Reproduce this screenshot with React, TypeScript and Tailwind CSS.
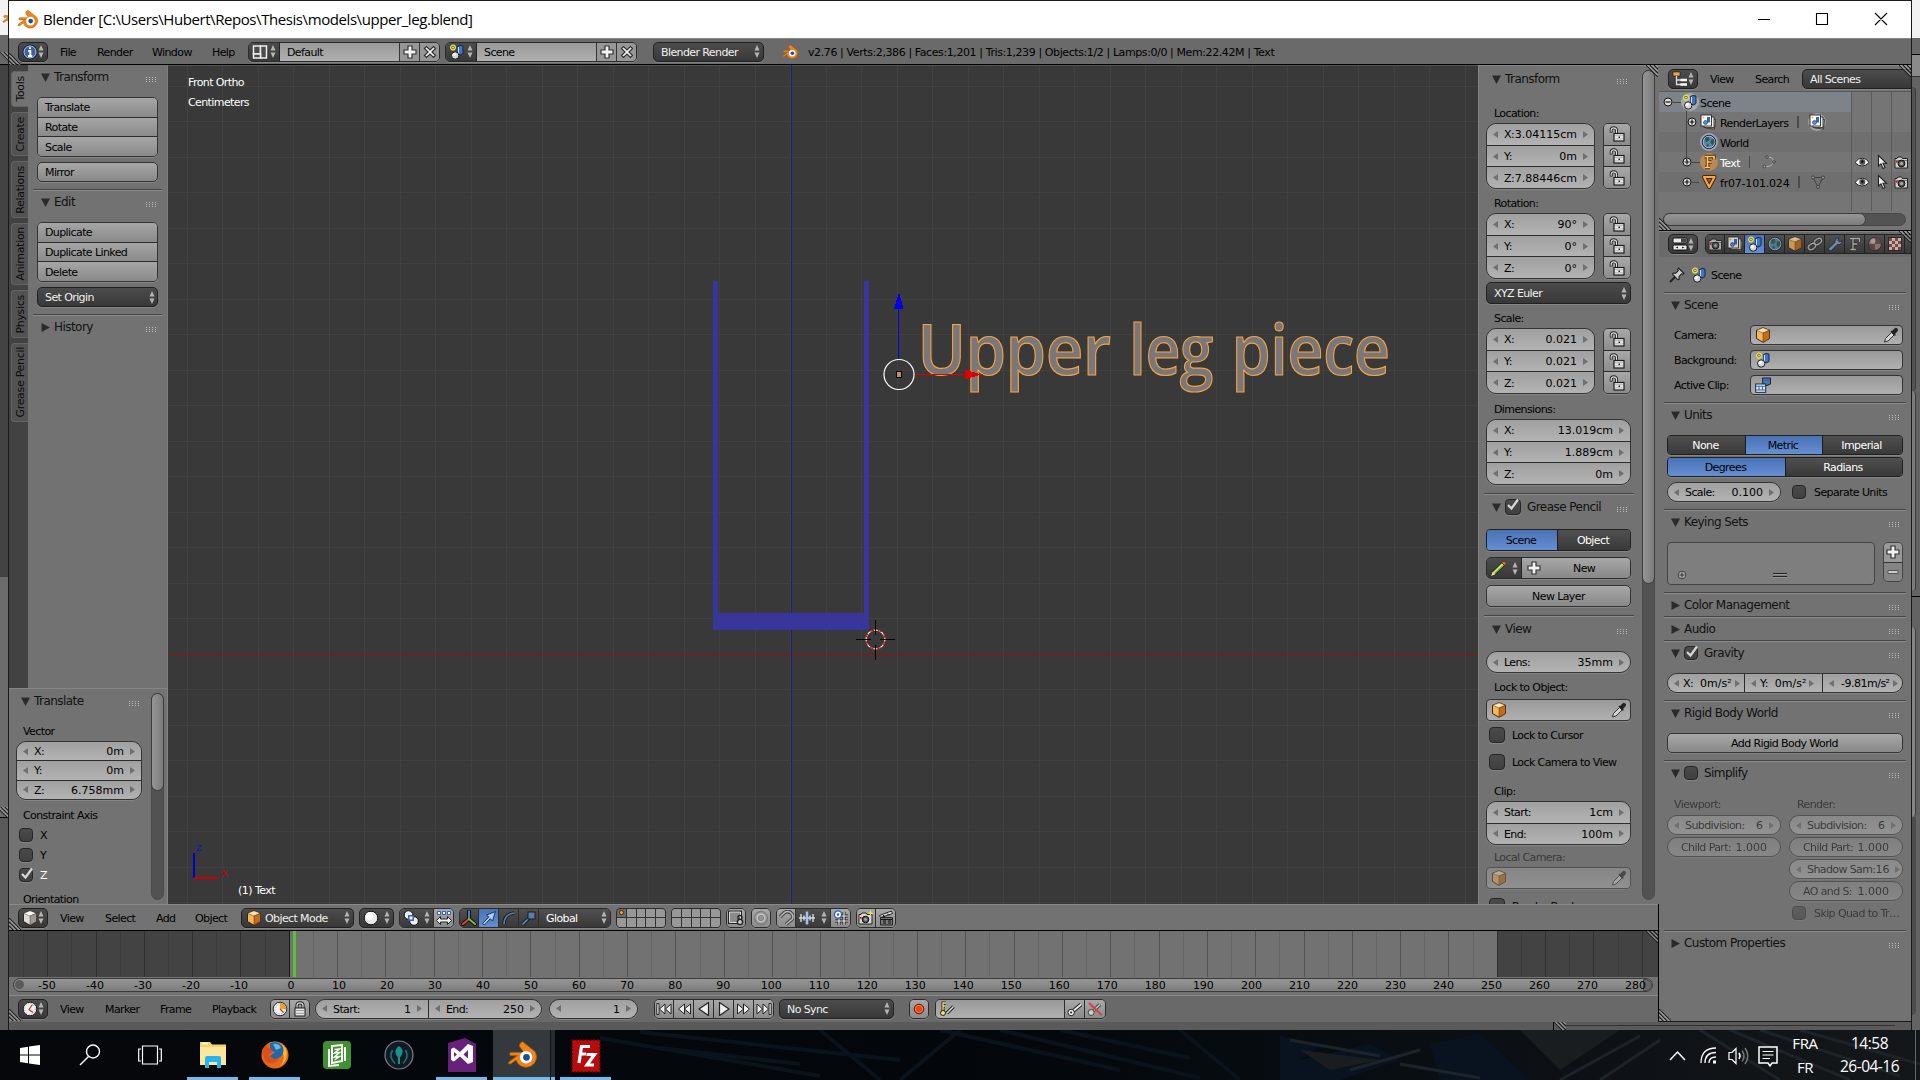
import React from "react";

type Kids = { children?: React.ReactNode };

/* ---------- icons (16x16 grid) ---------- */

const SceneShape = () => (
  <g>
    <circle cx="4" cy="3.6" r="2.4" fill="#6b6a35" stroke="#e3df4e" strokeWidth="1.3" />
    <circle cx="4" cy="3.6" r=".8" fill="#fffde0" />
    <path d="M8.5 2.5Q11 .6 14 2V9.500Q11.500 12 8.500 10Z" fill="#3f73c4" stroke="#16284a" />
    <path d="M10 3V10Q8.800 10 8.800 9.500V3Z" fill="#cfe2ff" />
    <circle cx="6.200" cy="11.500" r="3.700" fill="#d8d8d8" stroke="#1c1c1c" />
    <circle cx="5.200" cy="10.300" r="1.500" fill="#fff" />
  </g>
);

const CubeShape = ({ a, b, c }: { a: string; b: string; c: string }) => (
  <g stroke="#2a1a08" strokeWidth=".9" strokeLinejoin="round">
    <path d="M8 .8 14.500 3.300V11.500L8 15.300 1.500 11.500V3.300Z" fill={b} />
    <path d="M8 .8 14.500 3.300 8 6 1.500 3.300Z" fill={a} strokeWidth=".4" />
    <path d="M8 6 14.500 3.300V11.500L8 15.300Z" fill={c} strokeWidth=".4" />
  </g>
);

const ICONS: Record<string, React.ReactNode> = {
  info: (
    <g>
      <circle cx="8" cy="8" r="7" fill="#3c5f9e" stroke="#0f1a30" />
      <circle cx="8" cy="8" r="6" fill="none" stroke="#b9cbe8" strokeWidth=".9" />
      <path d="M8 3.200V5M6.200 7H8.300V11.500M6 12H10.300" stroke="#fff" strokeWidth="1.900" fill="none" />
    </g>
  ),
  layout: (
    <g fill="#4c4c4c" stroke="#eee" strokeWidth="1.500">
      <rect x="1.500" y="2" width="7" height="8" />
      <rect x="8.500" y="2" width="6" height="12" />
      <rect x="1.500" y="10" width="7" height="4" />
    </g>
  ),
  scene: <SceneShape />,
  plus: <path d="M6 2H10V6H14V10H10V14H6V10H2V6H6Z" fill="#f2f2f2" stroke="#333" strokeWidth="1.200" />,
  minus: <path d="M3 6.500H13V9.500H3Z" fill="#ccc" stroke="#555" />,
  x: <path d="M2.500 4.500 4.500 2.500 8 6 11.500 2.500 13.500 4.500 10 8 13.500 11.500 11.500 13.500 8 10 4.500 13.500 2.500 11.500 6 8Z" fill="#f2f2f2" stroke="#333" strokeWidth="1.200" />,
  blender: (
    <g>
      <path d="M8.300.9 15 6.200A5.600 5.600 0 1 1 4.800 10.700L2 12.700Q.4 13 1 11.700L5.600 8.300H1.800Q1 7.200 2 6.600H9L6.600 3.200Q6.600 1.500 8.300.9Z" fill="#f08418" stroke="#b35c08" strokeWidth=".4" />
      <circle cx="10.200" cy="9.200" r="3.300" fill="#fff" />
      <circle cx="10.400" cy="9.200" r="1.800" fill="#1d4f91" />
    </g>
  ),
  lockopen: (
    <g>
      <path d="M2.200 6.500V4Q2.200 1.800 4.700 1.800T7.500 4V8" fill="none" stroke="#222" strokeWidth="3" />
      <path d="M2.200 5.800V4Q2.200 1.800 4.700 1.800T7.500 4V8" fill="none" stroke="#ddd" strokeWidth="1.200" />
      <rect x="5" y="7.500" width="10" height="7.500" fill="#e6e6e6" stroke="#1d1d1d" strokeWidth="1.200" />
      <path d="M6 9.700H14M6 12.800H14" stroke="#b5b5b5" />
      <rect x="9.500" y="10.500" width="1.500" height="1.500" fill="#222" />
    </g>
  ),
  lock: (
    <g>
      <path d="M5 8V4.500Q5 1.800 8 1.800T11 4.500V8" fill="none" stroke="#222" strokeWidth="3.200" />
      <path d="M5 8V4.500Q5 1.800 8 1.800T11 4.500V8" fill="none" stroke="#ddd" strokeWidth="1.200" />
      <rect x="3" y="7" width="10" height="8" fill="#e6e6e6" stroke="#1d1d1d" />
      <path d="M4 9.500H12M4 12.300H12" stroke="#999" />
    </g>
  ),
  cube: <CubeShape a="#ffe2b0" b="#f6b45e" c="#c26d18" />,
  cubegray: <CubeShape a="#fff" b="#dcdcdc" c="#9a9a9a" />,
  eyedrop: (
    <g>
      <path d="M1.500 15 2.500 11.500 8.500 5.500 11 8 5 14Z" fill="#d5d5d5" stroke="#222" strokeWidth=".9" />
      <path d="M7.500 4.500 12 9 12.800 7.800 12 7 14.800 4Q15.500 2 14 1.200T11.500 1.500L9 4 8.300 3.500Z" fill="#222" />
    </g>
  ),
  clip: (
    <g stroke="#15233c" fill="#e5eefc">
      <path d="M7.500 1H15.500V7L12 8.500H8Z" fill="#4c77ad" />
      <rect x=".7" y="7" width="10" height="8.300" />
      <path d="M1 9.300H10.500M1 13H10.500M4 9V13M7.500 9V13M10 3.300H15" stroke="#3366a8" strokeWidth="1.100" />
    </g>
  ),
  outliner: (
    <g>
      <rect x="1" y="1" width="7" height="4" fill="#f2a24c" stroke="#111" strokeWidth=".6" />
      <path d="M4.500 5V13.500H9M4.500 9H9" stroke="#ddd" strokeWidth="1.300" fill="none" />
      <path d="M8.500 9H15M8.500 13.500H15" stroke="#fff" strokeWidth="2.600" />
    </g>
  ),
  props: (
    <g>
      <rect x="1" y="2" width="14" height="5" rx="1.500" fill="#eee" stroke="#111" />
      <path d="M9 2.500H14.500V6.500H9Z" fill="#444" />
      <rect x="1" y="9" width="14" height="5" rx="1.500" fill="#eee" stroke="#111" />
      <path d="M6 10.500 3.500 11.500 6 12.500ZM10 10.500 12.500 11.500 10 12.500Z" fill="#222" />
    </g>
  ),
  camera: (
    <g>
      <path d="M2 4.500H4L5 3H8.500L9.500 4.500H14.500V14H2Z" fill="#cfcfcf" stroke="#222" />
      <path d="M2.500 6.500H14" stroke="#777" />
      <circle cx="8.500" cy="9.500" r="3.400" fill="#555" stroke="#111" />
      <circle cx="8.500" cy="9.500" r="1.600" fill="#aaa" />
      <rect x="3" y="7" width="1.800" height="1.800" fill="#d22" />
    </g>
  ),
  layersimg: (
    <g>
      <path d="M6 4.500 15.500 5.500 14.500 15 5.500 14Z" fill="#cfc8a8" stroke="#222" strokeWidth=".8" />
      <path d="M4 3H14V13.500H4Z" fill="#eee" stroke="#222" strokeWidth=".8" />
      <rect x="1" y="1" width="10.500" height="11" fill="#fff" stroke="#222" strokeWidth=".9" />
      <path d="M7 3H10V8.500H7Z" fill="#2f67c0" />
      <circle cx="5.500" cy="8.500" r="2" fill="#5d8fdd" stroke="#143060" strokeWidth=".6" />
      <circle cx="3.400" cy="3.400" r="1" fill="#e3c02d" />
    </g>
  ),
  world: (
    <g>
      <circle cx="8" cy="8" r="6.700" fill="#5487b4" stroke="#16202c" />
      <circle cx="8" cy="8" r="5.800" fill="none" stroke="#b9d0e2" strokeWidth=".9" opacity=".8" />
      <path d="M4 4Q6 2.500 8 3L8.500 6 6 8 4.500 7.500ZM10 5.500 13 5 13.500 8.500 11.500 11.500 9.500 9ZM6 9.500 8 11 7 13 5.500 12Z" fill="#2d5b3a" />
    </g>
  ),
  link: (
    <g fill="none">
      <ellipse cx="5" cy="10.500" rx="4" ry="2.600" transform="rotate(-35 5 10.500)" stroke="#222" strokeWidth="3" />
      <ellipse cx="11" cy="5.500" rx="4" ry="2.600" transform="rotate(-35 11 5.500)" stroke="#222" strokeWidth="3" />
      <ellipse cx="5" cy="10.500" rx="4" ry="2.600" transform="rotate(-35 5 10.500)" stroke="#bbb" strokeWidth="1.500" />
      <ellipse cx="11" cy="5.500" rx="4" ry="2.600" transform="rotate(-35 11 5.500)" stroke="#bbb" strokeWidth="1.500" />
    </g>
  ),
  wrench: <path d="M1.500 12.500 8 6.500Q7.500 2.500 12 1.500L11 4.500 12.500 6 15 4.500Q15 9 10 8.700L4 15Q2 15.500 1.500 12.500Z" fill="#7ea3cf" stroke="#1d2b3d" />,
  wave: (
    <g fill="none">
      <path d="M3 2.500H12.500V6M6 2.500V13.500M3.500 13.500H9M6 8H10" stroke="#222" strokeWidth="3" />
      <path d="M3 2.500H12.500V6M6 2.500V13.500M3.500 13.500H9M6 8H10" stroke="#c9c9c9" strokeWidth="1.300" />
    </g>
  ),
  fontobj: (
    <g fill="none">
      <path d="M3.500 2.500H13V5.500M6.500 2.500V13.500M4 13.500H9M6.500 8H10.500" stroke="#4b2504" strokeWidth="3.400" />
      <path d="M3.500 2.500H13V5.500M6.500 2.500V13.500M4 13.500H9M6.500 8H10.500" stroke="#ffc27a" strokeWidth="1.700" />
    </g>
  ),
  material: (
    <g>
      <circle cx="8" cy="8" r="6.500" fill="#a98080" stroke="#222" />
      <path d="M8 8V1.500A6.500 6.500 0 0 1 14.500 8ZM8 8V14.500A6.500 6.500 0 0 1 1.500 8Z" fill="#5e4a4a" />
      <circle cx="6" cy="5" r="2.500" fill="#e0c8c8" opacity=".7" />
    </g>
  ),
  texture: (
    <g>
      <rect x="1.500" y="1.500" width="13" height="13" fill="#ddd" stroke="#222" />
      <path d="M2 2H5V5H2ZM8 2H11V5H8ZM5 5H8V8H5ZM11 5H14V8H11ZM2 8H5V11H2ZM8 8H11V11H8ZM5 11H8V14H5ZM11 11H14V14H11Z" fill="#a33e3e" />
    </g>
  ),
  pin: (
    <g strokeLinejoin="round">
      <path d="M1 15 6.500 9.500" stroke="#222" strokeWidth="2" />
      <path d="M9.500 1 15 6.500 13.500 7.200 12.500 6.800 10 9.500 10.200 12 9 12.800 3.500 7.200 4.200 6 6.800 6.200 9.300 3.600 8.800 2.300Z" fill="#cfcfcf" stroke="#1d1d1d" strokeWidth="1.100" />
    </g>
  ),
  pencil: (
    <g>
      <path d="M1 15 2.500 11 11 2.500 13.800 5.200 5 13.500Z" fill="#7aa52e" stroke="#1f2b06" strokeWidth=".8" />
      <path d="M3.500 12 12 3.700" stroke="#d9ee8c" strokeWidth="1.200" />
      <path d="M11 2.500 12.500 1.200Q15.800 1.500 15 4L13.800 5.200Z" fill="#e2604a" stroke="#4d120a" strokeWidth=".5" />
      <path d="M1 15 2.500 11 5 13.500Z" fill="#f1dcae" />
    </g>
  ),
  sphere: (
    <g>
      <circle cx="8" cy="8" r="6.800" fill="#e8e8e8" stroke="#111" />
      <circle cx="6.500" cy="6" r="3.800" fill="#fff" />
    </g>
  ),
  pivot: (
    <g>
      <circle cx="5.500" cy="5" r="4.300" fill="#eee" stroke="#111" />
      <circle cx="11" cy="11" r="4.300" fill="#eee" stroke="#111" />
      <rect x="5.800" y="5.800" width="4.400" height="4.400" fill="#fff" stroke="#2a62c4" strokeWidth="1.500" />
    </g>
  ),
  centers: (
    <g>
      <path d="M1.500 1.500H4.500V4.500H1.500ZM6.500 1.500H9.500V4.500H6.500ZM11.500 1.500H14.500V4.500H11.500Z" fill="#fff" stroke="#2a62c4" />
      <path d="M.5 10.500 4.500 6.500V9H11.500V6.500L15.500 10.500 11.500 14.500V12H4.500V14.500Z" fill="#f0f0f0" stroke="#222" />
    </g>
  ),
  axes: (
    <g fill="none" strokeLinecap="round">
      <path d="M8 1.500V9M8 9 2 14M8 9 14 14" stroke="#111" strokeWidth="4" />
      <path d="M8 1.500V9" stroke="#5b8be0" strokeWidth="1.800" />
      <path d="M8 9 2 14" stroke="#e2462e" strokeWidth="2" />
      <path d="M8 9 14 14" stroke="#70c23c" strokeWidth="2" />
    </g>
  ),
  arrow: <path d="M1.500 13.500 7.800 7 5.500 5 14.500 1.500 11.500 11 9.300 8.700 3.500 15Z" fill="#a9cdf5" stroke="#15305c" />,
  arc: (
    <g fill="none">
      <path d="M3 14Q3 4.500 13 3" stroke="#151d2a" strokeWidth="3.600" />
      <path d="M3 14Q3 4.500 13 3" stroke="#5b7fa8" strokeWidth="1.700" />
    </g>
  ),
  scaleman: (
    <g>
      <path d="M1.500 14.500 9 7" stroke="#151d2a" strokeWidth="3.500" />
      <path d="M1.500 14.500 9 7" stroke="#7090b5" strokeWidth="1.600" />
      <rect x="7" y="2" width="7" height="7" fill="#5b7fa8" stroke="#151d2a" />
    </g>
  ),
  lockcam: (
    <g>
      <path d="M1.500 2H12.500V12.500H1.500Z" fill="none" stroke="#222" strokeWidth="3" />
      <path d="M1.500 2H12.500V12.500H1.500Z" fill="#8b8b8b" stroke="#ddd" />
      <circle cx="12" cy="7.500" r="2" fill="none" stroke="#222" strokeWidth="1.400" />
      <circle cx="12" cy="12" r="2.600" fill="#ccc" stroke="#222" strokeWidth="1.400" />
    </g>
  ),
  prop: (
    <g fill="none" stroke="#7b7b7b">
      <circle cx="8" cy="8" r="6.500" strokeWidth="1.300" />
      <circle cx="8" cy="8" r="3.700" stroke="#c4c4c4" strokeWidth="1.600" />
      <circle cx="8" cy="8" r="2.500" />
    </g>
  ),
  magnet: (
    <g fill="none">
      <path d="M2 7 6.500 2.500Q11 0 14 4T12 11L8 14.500" stroke="#444" strokeWidth="3.600" />
      <path d="M2 7 6.500 2.500Q11 0 14 4T12 11L8 14.500" stroke="#bbb" strokeWidth="1.500" />
    </g>
  ),
  increment: (
    <g>
      <path d="M0 8H16M2 4V12M5 5.500V10.500M11 5.500V10.500M14 4V12" stroke="#d8d8d8" strokeWidth="1.400" />
      <path d="M8 1.500V14.500" stroke="#9cc4ff" strokeWidth="2.600" />
    </g>
  ),
  snapgrid: (
    <g>
      <path d="M6 2V15M11 2V15M2 6H15M2 11H15" stroke="#222" strokeWidth="3" />
      <path d="M6 2V15M11 2V15M2 6H15M2 11H15" stroke="#eee" strokeWidth="1.200" />
      <circle cx="5" cy="4.500" r="3.600" fill="#fff" stroke="#2a62c4" strokeWidth="1.300" />
      <circle cx="5" cy="4.500" r="1.200" fill="#2a62c4" />
    </g>
  ),
  camplus: (
    <g>
      <path d="M1 4.500H3L4 3H8L9 4.500H14V14H1Z" fill="#d8d8d8" stroke="#222" />
      <circle cx="7.500" cy="9.500" r="3.300" fill="#555" stroke="#111" />
      <circle cx="7.500" cy="9.500" r="1.400" fill="#aaa" />
      <rect x="2" y="7" width="1.800" height="1.800" fill="#d22" />
      <path d="M12.500 0 13.300 2.500 16 3.200 13.300 4 12.500 6.500 11.700 4 9.500 3.200 11.700 2.500Z" fill="#ffe04a" />
    </g>
  ),
  clapper: (
    <g stroke="#222">
      <path d="M1.500 5.500 13.500 1 14.500 3.500 2.500 7.500Z" fill="#e5e5e5" />
      <path d="M2.500 7.500H14.500V15H2.500Z" fill="#777" />
      <path d="M3 9.500H14M5 5 7 7M9 3.500 11 5.500M5 11H8M10 11H13M5 13H8M10 13H13" stroke="#111" />
    </g>
  ),
  clock: (
    <g>
      <circle cx="8" cy="8" r="6.800" fill="#f3f3f3" stroke="#222" />
      <circle cx="8" cy="8" r="5.300" fill="none" stroke="#999" strokeDasharray="1 1.800" />
      <path d="M10.500 3.500 7 8.500 11 11.500" fill="none" stroke="#c33" strokeWidth="1.200" />
    </g>
  ),
  clockrange: (
    <g>
      <circle cx="8" cy="8" r="6.800" fill="#f3f3f3" stroke="#222" />
      <path d="M8 8V1.700A6.300 6.300 0 0 1 14.300 8Z" fill="#ff9e1b" />
      <circle cx="8" cy="8" r="5" fill="none" stroke="#999" strokeDasharray="1 1.700" />
      <path d="M8 8 11.500 11.500" stroke="#c33" strokeWidth="1.200" />
    </g>
  ),
  first: (
    <g fill="#eee" stroke="#222" strokeLinejoin="round">
      <path d="M.8 2.500H3V13.500H.8Z" />
      <path d="M9 3V13L3.500 8ZM15 3V13L9.500 8Z" />
    </g>
  ),
  prev: <path d="M8.500 3V13L2.500 8ZM14.500 3V13L8.500 8Z" fill="#eee" stroke="#222" strokeLinejoin="round" />,
  back: <path d="M12.500 1.500V14.500L3 8Z" fill="#eee" stroke="#222" strokeWidth="1.200" strokeLinejoin="round" />,
  record: (
    <g>
      <circle cx="8" cy="8" r="4.800" fill="#e8420e" stroke="#5a1803" />
      <circle cx="8" cy="8" r="3.600" fill="none" stroke="#ff9a70" strokeWidth=".7" />
    </g>
  ),
  keyset: (
    <g fill="none">
      <path d="M4 11V2H7M4 5H6" stroke="#222" strokeWidth="3" />
      <path d="M4 11V2H7M4 5H6" stroke="#f3df7a" strokeWidth="1.300" />
      <path d="M8 12 14.500 5.500" stroke="#222" strokeWidth="3.400" />
      <path d="M8 12 14.500 5.500" stroke="#ddd" strokeWidth="1.500" />
      <circle cx="4" cy="12" r="2.500" fill="#f3df7a" stroke="#222" />
    </g>
  ),
  key: (
    <g>
      <path d="M5 11 14 3.500" stroke="#222" strokeWidth="3.800" />
      <path d="M5 11 14 3.500" stroke="#eee" strokeWidth="1.700" />
      <circle cx="4.200" cy="11.500" r="3.200" fill="#eee" stroke="#222" />
      <circle cx="4.200" cy="11.500" r="1.100" fill="#222" />
    </g>
  ),
  keydel: (
    <g>
      <path d="M5 11 13 3.500" stroke="#444" strokeWidth="3.600" />
      <path d="M5 11 13 3.500" stroke="#ccc" strokeWidth="1.500" />
      <circle cx="4.200" cy="11.500" r="3" fill="#ccc" stroke="#444" />
      <path d="M2 2 14.500 14" stroke="#d64040" strokeWidth="2" />
    </g>
  ),
  eye: (
    <g>
      <path d="M1 8.500Q4 4 8.500 4.200 12.500 4.200 15 8.500 12 12 8 12 4 12 1 8.500Z" fill="#f4f4f4" stroke="#222" />
      <circle cx="8.300" cy="8" r="3" fill="#555" />
      <circle cx="8.300" cy="7.600" r="1.300" fill="#111" />
    </g>
  ),
  cursor: <path d="M4.500 1.500V12L7 9.800 9 14.500 11 13.500 9 9.300H12.500Z" fill="#eee" stroke="#222" strokeWidth="1.100" />,
  mesh: (
    <g>
      <path d="M3 3H13.500L8.200 13Z" fill="none" stroke="#4b2504" strokeWidth="4" strokeLinejoin="round" />
      <path d="M3 3H13.500L8.200 13Z" fill="none" stroke="#ffa849" strokeWidth="2" strokeLinejoin="round" />
    </g>
  ),
  meshdata: (
    <g stroke="#404040" fill="#999">
      <path d="M3 3.500H13L8 13Z" fill="none" />
      <circle cx="3" cy="3.500" r="1.500" />
      <circle cx="13" cy="3.500" r="1.500" />
      <circle cx="8" cy="13" r="1.500" />
    </g>
  ),
  curvedata: (
    <g stroke="#444" fill="#aaa">
      <path d="M6 3Q13 3 12.500 8 11 13 4.500 12.500" fill="none" stroke="#b5b5b5" />
      <circle cx="6" cy="3" r="1.300" />
      <circle cx="13" cy="8" r="1.300" />
      <circle cx="3.500" cy="12.500" r="1.300" />
    </g>
  ),
};

const Icon = ({ n, s = 16, className = "" }: { n: string; s?: number; className?: string }) => (
  <svg width={s} height={s} viewBox="0 0 16 16" className={"shrink-0 " + className}>
    {ICONS[n]}
  </svg>
);

const Flip = ({ n }: { n: string }) => <Icon n={n} className="-scale-x-100" />;

const UpDown = ({ className = "" }: { className?: string }) => (
  <svg width="6" height="13" viewBox="0 0 6 13" className={"shrink-0 " + className}>
    <path d="M3 0 5.500 5.500H.5ZM3 13 .5 7.500H5.500Z" fill="#b5b5b5" />
  </svg>
);

const Corner = ({ className = "" }: { className?: string }) => (
  <svg width="12" height="12" viewBox="0 0 12 12" className={"absolute " + className}>
    <path d="M0 0 12 12M4 0 12 8M8 0 12 4" stroke="#222" strokeWidth="1.200" />
    <path d="M1.500 0 12 10.500M5.500 0 12 6.500M9.500 0 12 2.500" stroke="#bbb" strokeWidth="1" />
  </svg>
);

/* ---------- widgets ---------- */

const EMB = "shadow-[0_1px_0_#858585]";

const Btn = ({ children, className = "" }: Kids & { className?: string }) => (
  <div className={`flex items-center rounded-[5px] border border-[#343434] bg-linear-to-b from-[#a8a8a8] to-[#888888] pt-px text-black ${EMB} ${className}`}>{children}</div>
);

const Menu = ({ children, className = "" }: Kids & { className?: string }) => (
  <div className={`flex items-center rounded-[5px] border border-[#202020] bg-linear-to-b from-[#4c4c4c] to-[#383838] text-[#f0f0f0] [&>span]:pt-px ${EMB} ${className}`}>{children}</div>
);

const EditorBtn = ({ n }: { n: string }) => (
  <Menu className="h-[20px] w-[30px] shrink-0 justify-between pr-[3px] pl-[3px]">
    <Icon n={n} />
    <UpDown />
  </Menu>
);

const Arr = ({ flip = false }: { flip?: boolean }) => (
  <svg width="5" height="7" viewBox="0 0 5 7" className={flip ? "shrink-0" : "shrink-0 rotate-180"}>
    <path d="M0 0 5 3.500 0 7Z" fill="#6f6f6f" />
  </svg>
);

const NumRow = ({ l, v, className = "" }: { l: string; v: string; className?: string }) => (
  <div className={`flex min-w-0 flex-1 items-center bg-linear-to-b from-[#a0a0a0] to-[#b3b3b3] px-[6px] whitespace-nowrap text-black ${className}`}>
    <Arr />
    <span className="ml-[6px] pt-px">{l}</span>
    <span className="ml-auto pt-px pr-[6px] tracking-normal">{v}</span>
    <Arr flip />
  </div>
);

const NumGroup = ({ rows, className = "" }: { rows: [string, string][]; className?: string }) => (
  <div className={`flex flex-col divide-y divide-[#2c2c2c] overflow-hidden rounded-[10px] border border-[#343434] ${EMB} ${className}`}>
    {rows.map(([l, v]) => (
      <NumRow key={l} l={l} v={v} />
    ))}
  </div>
);

const Num = ({ l, v, className = "" }: { l: string; v: string; className?: string }) => (
  <div className={`flex overflow-hidden rounded-[11px] border border-[#343434] ${EMB} ${className}`}>
    <NumRow l={l} v={v} />
  </div>
);

const Slider = ({ l, v, className = "" }: { l: string; v: string; className?: string }) => (
  <div className={`flex items-center justify-between rounded-[11px] border border-[#343434] bg-linear-to-b from-[#8c8c8c] to-[#9c9c9c] px-[13px] pt-px text-black ${EMB} ${className}`}>
    <span>{l}</span>
    <span className="tracking-normal">{v}</span>
  </div>
);

const Locks = () => (
  <div className={`flex h-[66px] w-[28px] flex-col divide-y divide-[#2c2c2c] overflow-hidden rounded-[5px] border border-[#343434] ${EMB}`}>
    {[0, 1, 2].map((i) => (
      <div key={i} className="flex flex-1 items-center justify-center bg-linear-to-b from-[#a8a8a8] to-[#8c8c8c]">
        <Icon n="lockopen" />
      </div>
    ))}
  </div>
);

const Check = ({ on = false, s = "size-[14px]" }: { on?: boolean; s?: string }) => (
  <div className={`relative shrink-0 rounded-[4px] border border-[#262626] bg-linear-to-b from-[#4a4a4a] to-[#404040] ${EMB} ${s}`}>
    {on && (
      <svg viewBox="0 0 14 14" className="absolute -top-[2px] left-0 size-[14px]">
        <path d="M2 7 5.500 10.500 12 1.500" fill="none" stroke="#d8d8d8" strokeWidth="2.200" />
      </svg>
    )}
  </div>
);

const Dots = () => (
  <div className="grid shrink-0 grid-cols-[1px_1px_1px_1px] gap-x-[2px] gap-y-[1px]">
    {Array.from({ length: 12 }, (_, i) => (
      <i key={i} className="size-px bg-[#bdbdbd]" />
    ))}
  </div>
);

const Title = ({ children, open = true, check, h = "h-[24px] pb-[2px]", pad = "pl-[7px] pr-[7px]", big }: Kids & { open?: boolean; check?: boolean; h?: string; pad?: string; big?: boolean }) => (
  <div className={`flex shrink-0 items-center text-[12px] tracking-[-0.55px] text-[#111] ${h} ${pad}`}>
    <svg width="9" height="9" viewBox="0 0 9 9" className={open ? "shrink-0" : "shrink-0 -rotate-90"}>
      <path d="M0 .5H9L4.500 9Z" fill="#2a2a2a" />
    </svg>
    {check !== undefined && (
      <span className="ml-[4px]">
        <Check on={check} s={big ? "size-[16px]" : "size-[14px]"} />
      </span>
    )}
    <span className={check !== undefined ? "ml-[6px]" : "ml-[4px]"}>{children}</span>
    <span className="ml-auto pt-[4px]">
      <Dots />
    </span>
  </div>
);

const Sep = ({ className = "" }: { className?: string }) => <div className={`h-[2px] shrink-0 border-t border-[#464646] bg-[#8d8d8d] ${className}`} />;

const Label = ({ children, className = "" }: Kids & { className?: string }) => <div className={`flex h-[20px] shrink-0 items-center ${className}`}>{children}</div>;

const ButtonStack = ({ items }: { items: string[] }) => (
  <div className={`flex h-[60px] flex-col divide-y divide-[#2c2c2c] overflow-hidden rounded-[5px] border border-[#343434] ${EMB}`}>
    {items.map((t) => (
      <div key={t} className="flex flex-1 items-center bg-linear-to-b from-[#a6a6a6] to-[#8a8a8a] pt-px pl-[7px] text-black">
        {t}
      </div>
    ))}
  </div>
);

const Seg = ({ items, on, cols, className = "" }: { items: string[]; on: number; cols: string; className?: string }) => (
  <div className={`grid overflow-hidden rounded-[4px] border border-[#202020] ${EMB} ${cols} ${className}`}>
    {items.map((t, i) => (
      <div
        key={t}
        className={
          "flex items-center justify-center border-[#1c1c1c] pt-px pr-[2px] " +
          (i ? "border-l " : "") +
          (i === on ? "bg-linear-to-b from-[#4a73b6] to-[#658ed3] text-black" : "bg-linear-to-b from-[#505050] to-[#393939] text-white")
        }
      >
        {t}
      </div>
    ))}
  </div>
);

const Field = ({ icon, drop, className = "" }: { icon: string; drop?: boolean; className?: string }) => (
  <div className={`flex items-center justify-between rounded-[4px] border border-[#343434] bg-linear-to-b from-[#999] to-[#b0b0b0] pr-[3px] pl-[4px] ${EMB} ${className}`}>
    <Icon n={icon} />
    {drop && <Icon n="eyedrop" />}
  </div>
);

/* ---------- title and info bars ---------- */

const TitleBar = () => (
  <div className="flex h-[37px] shrink-0 items-center bg-white pl-[8px] text-black">
    <Icon n="blender" s={21} />
    <span className="ml-[5px] pb-px font-['Open_Sans',sans-serif] text-[15px] tracking-[-0.42px]">Blender [C:\Users\Hubert\Repos\Thesis\models\upper_leg.blend]</span>
    <svg width="154" height="20" viewBox="0 0 154 20" className="mb-[2px] ml-auto" fill="none" stroke="#000">
      <path d="M1 10.500H13M59.500 4.500H70.500V15.500H59.500ZM118 4 130 16M130 4 118 16" strokeWidth="1.100" />
    </svg>
  </div>
);

const IdBlock = ({ icon, text }: { icon: string; text: string }) => (
  <div className={`flex h-[20px] w-[192px] shrink-0 overflow-hidden rounded-[5px] border border-[#2b2b2b] ${EMB}`}>
    <div className="flex w-[31px] items-center justify-between border-r border-[#222] bg-linear-to-b from-[#4c4c4c] to-[#383838] pr-[3px] pl-[3px]">
      <Icon n={icon} />
      <UpDown />
    </div>
    <div className="flex flex-1 items-center bg-linear-to-b from-[#999] to-[#b0b0b0] pt-[2px] pl-[7px] text-black">{text}</div>
    <div className="flex w-[20px] items-center justify-center border-l border-[#333] bg-[#979797]">
      <Icon n="plus" />
    </div>
    <div className="flex w-[20px] items-center justify-center border-l border-[#333] bg-[#979797]">
      <Icon n="x" />
    </div>
  </div>
);

const InfoBar = () => (
  <div className="flex h-[26px] shrink-0 items-center border-t border-[#858585] bg-[#6a6a6a] pl-[9px] text-black [&>span]:pt-[2px]">
    <EditorBtn n="info" />
    <span className="ml-[12px] w-[37px]">File</span>
    <span className="w-[55px]">Render</span>
    <span className="w-[60px]">Window</span>
    <span className="w-[36px]">Help</span>
    <IdBlock icon="layout" text="Default" />
    <div className="w-[5px]" />
    <IdBlock icon="scene" text="Scene" />
    <Menu className="ml-[16px] h-[20px] w-[111px] justify-between pr-[3px] pl-[7px]">
      <span>Blender Render</span>
      <UpDown />
    </Menu>
    <Icon n="blender" className="ml-[18px]" />
    <span className="ml-[10px] tracking-[-0.4px] whitespace-nowrap">v2.76 | Verts:2,386 | Faces:1,201 | Tris:1,239 | Objects:1/2 | Lamps:0/0 | Mem:22.42M | Text</span>
  </div>
);

/* ---------- tool shelf ---------- */

const TABS: [string, string][] = [
  ["Tools", "h-[36px] bg-[#727272]"],
  ["Create", "h-[44px] bg-[#535353]"],
  ["Relations", "h-[57px] bg-[#535353]"],
  ["Animation", "h-[62px] bg-[#535353]"],
  ["Physics", "h-[48px] bg-[#535353]"],
  ["Grease Pencil", "h-[79px] bg-[#535353]"],
];

const ToolShelf = () => (
  <div className="flex w-[159px] shrink-0 flex-col">
    <div className="flex h-[623px] shrink-0">
      <div className="flex w-[19px] flex-col gap-[5px] bg-[#424242] pt-[6px] pl-[2px]">
        {TABS.map(([t, c]) => (
          <div key={t} className={`flex items-center justify-center rounded-l-[4px] border border-r-0 border-[#646464] text-[#0c0c0c] ${c}`}>
            <span className="rotate-180 text-[11px] tracking-[-0.3px] whitespace-nowrap [writing-mode:vertical-rl]">{t}</span>
          </div>
        ))}
      </div>
      <div className="flex w-[140px] flex-col border-r border-[#7d7d7d] bg-[#727272] px-[5px]">
        <Title h="h-[24px]" pad="pl-[8px] pr-[6px]">
          Transform
        </Title>
        <div className="mt-[8px] px-[4px]">
          <ButtonStack items={["Translate", "Rotate", "Scale"]} />
          <Btn className="mt-[5px] h-[20px] pl-[7px]">Mirror</Btn>
        </div>
        <Sep className="mt-[7px]" />
        <Title pad="pl-[8px] pr-[6px]">Edit</Title>
        <div className="mt-[7px] px-[4px]">
          <ButtonStack items={["Duplicate", "Duplicate Linked", "Delete"]} />
          <Menu className="mt-[5px] h-[20px] justify-between pr-[2px] pl-[7px]">
            <span>Set Origin</span>
            <UpDown />
          </Menu>
        </div>
        <Sep className="mt-[7px]" />
        <Title open={false} pad="pl-[8px] pr-[6px]">
          History
        </Title>
      </div>
    </div>
    <div className="flex h-[216px] overflow-hidden border-t border-r border-[#858585] bg-[#727272]">
      <div className="flex w-[142px] shrink-0 flex-col pl-[7px]">
        <Title h="h-[24px]" pad="pl-[5px] pr-[12px]">
          Translate
        </Title>
        <Label className="mt-[8px] pl-[7px]">Vector</Label>
        <NumGroup
          className="h-[59px] w-[126px] shrink-0"
          rows={[
            ["X:", "0m"],
            ["Y:", "0m"],
            ["Z:", "6.758mm"],
          ]}
        />
        <Label className="mt-[5px] pl-[7px]">Constraint Axis</Label>
        {["X", "Y", "Z"].map((a) => (
          <div key={a} className="flex h-[20px] shrink-0 items-center pl-[3px]">
            <Check on={a === "Z"} />
            <span className={a === "Z" ? "ml-[7px] pt-px text-white" : "ml-[7px] pt-px"}>{a}</span>
          </div>
        ))}
        <Label className="mt-[4px] pl-[7px]">Orientation</Label>
      </div>
      <div className="mt-[4px] h-[207px] w-[13px] rounded-[7px] border border-[#4a4a4a] bg-[#525252]">
        <div className="-m-px h-[98px] w-[13px] rounded-[7px] border border-[#3c3c3c] bg-linear-to-r from-[#959595] to-[#7c7c7c]" />
      </div>
    </div>
  </div>
);

/* ---------- 3D viewport ---------- */

const steps = (n: number, from: number) => Array.from({ length: n }, (_, i) => Math.floor(from + i * 35.5) + 0.5);

const Viewport = () => (
  <svg width="1310" height="839" viewBox="168 65 1310 839" className="shrink-0 bg-[#393939]" shapeRendering="crispEdges">
    <path d={steps(37, 187.3).map((x) => `M${x} 65V904`).join("") + steps(24, 86).map((y) => `M168 ${y}H1478`).join("")} stroke="#414141" />
    <path d="M168 65.500H1478" stroke="#525252" />
    <path d="M168 654.500H1478" stroke="#8f1218" />
    <path d="M791.500 65V904" stroke="#1c1b8a" />
    <path d="M713 281H718V613H864V281H869V630H713Z" fill="#39369b" />
    <g shapeRendering="auto" fill="#7a777c" stroke="#f5a33a" strokeWidth="1.200" fontFamily="'Open Sans', sans-serif" fontSize="70" fontWeight="600">
      <text x="917.500" y="374.500" textLength="193" lengthAdjust="spacingAndGlyphs">Upper</text>
      <text x="1129" y="374.500" textLength="84" lengthAdjust="spacingAndGlyphs">leg</text>
      <text x="1231.500" y="374.500" textLength="158" lengthAdjust="spacingAndGlyphs">piece</text>
    </g>
    <path d="M898.500 359V309" stroke="#0000e0" />
    <path d="M899 292 903.500 309H894Z" fill="#0000e0" />
    <path d="M914 374.500H983" stroke="#e00000" />
    <path d="M965 369.500 981 374.500 965 379.500Z" fill="#e00000" />
    <g shapeRendering="auto" fill="none">
      <circle cx="899" cy="374.500" r="15" stroke="#fff" strokeWidth="1.200" />
      <circle cx="875.500" cy="639.500" r="9.500" stroke="#fff" strokeWidth="1.100" />
      <circle cx="875.500" cy="639.500" r="9.500" stroke="#f00" strokeWidth="1.200" strokeDasharray="3.730 3.730" strokeDashoffset="-1.900" />
    </g>
    <rect x="896.500" y="371.500" width="5" height="6" fill="#c78f3e" stroke="#000" />
    <path d="M875.500 620V635M875.500 645V660M856 639.500H871M880 639.500H895" stroke="#000" />
    <path d="M194 853V878" stroke="#0000c8" strokeWidth="2" />
    <path d="M194 878H219" stroke="#c80000" strokeWidth="2" />
    <g fontFamily="'DejaVu Sans', sans-serif" fontSize="11" shapeRendering="auto">
      <text x="196" y="851" fill="#1010c8">z</text>
      <text x="221.500" y="876" fill="#c80000">x</text>
      <g fill="#fff">
        <text x="188" y="86" textLength="56">Front Ortho</text>
        <text x="188" y="106" textLength="61">Centimeters</text>
        <text x="238" y="894" textLength="37">(1) Text</text>
      </g>
    </g>
  </svg>
);

const NPanel = () => (
  <div className="flex h-[839px] w-[181px] shrink-0 overflow-hidden border-t border-l border-[#858585] bg-[#727272]">
    <div className="flex w-[158px] flex-col pl-[5px]">
      <Title h="h-[26px]" pad="pl-[8px] pr-[10px]">
        Transform
      </Title>
      <div className="flex w-[147px] flex-col pl-[2px] [&>*]:shrink-0">
        <Label className="mt-[11px] pl-[8px]">Location:</Label>
        <div className="flex justify-between">
          <NumGroup className="h-[66px] w-[109px]" rows={[["X:", "3.04115cm"], ["Y:", "0m"], ["Z:", "7.88446cm"]]} />
          <Locks />
        </div>
        <Label className="mt-[4px] pl-[8px]">Rotation:</Label>
        <div className="flex justify-between">
          <NumGroup className="h-[66px] w-[109px]" rows={[["X:", "90°"], ["Y:", "0°"], ["Z:", "0°"]]} />
          <Locks />
        </div>
        <Menu className="mt-[3px] h-[22px] justify-between pr-[3px] pl-[7px]">
          <span>XYZ Euler</span>
          <UpDown />
        </Menu>
        <Label className="mt-[4px] pl-[8px]">Scale:</Label>
        <div className="flex justify-between">
          <NumGroup className="h-[66px] w-[109px]" rows={[["X:", "0.021"], ["Y:", "0.021"], ["Z:", "0.021"]]} />
          <Locks />
        </div>
        <Label className="mt-[5px] pl-[8px]">Dimensions:</Label>
        <NumGroup className="h-[66px]" rows={[["X:", "13.019cm"], ["Y:", "1.889cm"], ["Z:", "0m"]]} />
      </div>
      <Sep className="mt-[8px] w-[150px]" />
      <Title check big h="h-[24px]" pad="pl-[8px] pr-[10px]">
        Grease Pencil
      </Title>
      <div className="flex w-[147px] flex-col pl-[2px] [&>*]:shrink-0">
        <Seg className="mt-[10px] h-[22px]" cols="grid-cols-[70px_1fr]" items={["Scene", "Object"]} on={0} />
        <div className={`mt-[6px] flex h-[22px] overflow-hidden rounded-[5px] border border-[#2b2b2b] ${EMB}`}>
          <div className="flex w-[35px] items-center justify-between border-r border-[#222] bg-linear-to-b from-[#4c4c4c] to-[#383838] px-[3px]">
            <Icon n="pencil" s={17} />
            <UpDown />
          </div>
          <div className="flex flex-1 items-center bg-linear-to-b from-[#a8a8a8] to-[#888] pl-[4px] text-black">
            <Icon n="plus" />
            <span className="ml-[31px] pt-px">New</span>
          </div>
        </div>
        <Btn className="mt-[6px] h-[22px] justify-center">New Layer</Btn>
      </div>
      <Sep className="mt-[8px] w-[150px]" />
      <Title h="h-[24px]" pad="pl-[8px] pr-[10px]">
        View
      </Title>
      <div className="flex w-[147px] flex-col pl-[2px] [&>*]:shrink-0">
        <Num className="mt-[10px] h-[22px]" l="Lens:" v="35mm" />
        <Label className="mt-[4px] pl-[8px]">Lock to Object:</Label>
        <Field className="mt-[2px] h-[22px]" icon="cube" drop />
        <div className="mt-[6px] flex h-[16px] items-center gap-[7px] pl-[3px]">
          <Check s="size-[16px]" />
          <span className="pt-px">Lock to Cursor</span>
        </div>
        <div className="mt-[11px] flex h-[16px] items-center gap-[7px] pl-[3px] whitespace-nowrap">
          <Check s="size-[16px]" />
          <span className="pt-px">Lock Camera to View</span>
        </div>
        <Label className="mt-[11px] pl-[8px]">Clip:</Label>
        <NumGroup className="h-[44px]" rows={[["Start:", "1cm"], ["End:", "100m"]]} />
        <Label className="mt-[2px] pl-[8px] opacity-50">Local Camera:</Label>
        <Field className="h-[22px] opacity-50" icon="cube" drop />
        <div className="mt-[9px] flex h-[16px] items-center gap-[7px] pl-[3px]">
          <Check s="size-[16px]" />
          <span className="pt-px">Render Border</span>
        </div>
      </div>
    </div>
    <div className="mt-[4px] ml-[5px] h-[830px] w-[13px] rounded-[7px] border border-[#4a4a4a] bg-[#525252]">
      <div className="-m-px h-[514px] w-[13px] rounded-[7px] border border-[#3c3c3c] bg-linear-to-r from-[#959595] to-[#7c7c7c]" />
    </div>
  </div>
);

/* ---------- 3D view header ---------- */

const Cells = ({ children }: Kids) => <div className={`flex h-[20px] shrink-0 divide-x divide-[#2c2c2c] overflow-hidden rounded-[5px] border border-[#2b2b2b] ${EMB}`}>{children}</div>;

const Cell = ({ n, w = "w-[19px]", bg = "bg-linear-to-b from-[#a8a8a8] to-[#8c8c8c]", flip = false }: { n: string; w?: string; bg?: string; flip?: boolean }) => (
  <div className={`flex items-center justify-center ${w} ${bg}`}>{flip ? <Flip n={n} /> : <Icon n={n} />}</div>
);

const DARK = "bg-linear-to-b from-[#505050] to-[#393939]";
const BLUE = "bg-linear-to-b from-[#4a73b6] to-[#658ed3]";

const Layers = ({ dot = false }: { dot?: boolean }) => (
  <div className={`grid h-[20px] w-[50px] shrink-0 grid-cols-5 grid-rows-2 gap-px overflow-hidden rounded-[4px] border border-[#2c2c2c] bg-[#333] ${EMB}`}>
    {Array.from({ length: 10 }, (_, i) => (
      <div key={i} className={"flex items-center justify-center " + (dot && i === 0 ? "bg-[#6a6a6a]" : "bg-[#989898]")}>
        {dot && i === 0 && <div className="size-[5px] rounded-full border border-[#4b2504] bg-[#f2a24c]" />}
      </div>
    ))}
  </div>
);

const ViewHeader = () => (
  <div className="flex h-[26px] shrink-0 items-center border-t border-[#8a8a8a] bg-[#727272] pl-[9px] [&>span]:pt-px">
    <EditorBtn n="cubegray" />
    <span className="ml-[12px] w-[45px]">View</span>
    <span className="w-[51px]">Select</span>
    <span className="w-[39px]">Add</span>
    <span className="w-[46px]">Object</span>
    <Menu className="h-[20px] w-[113px] pr-[3px] pl-[4px]">
      <Icon n="cube" />
      <span className="ml-[3px] whitespace-nowrap">Object Mode</span>
      <UpDown className="ml-auto" />
    </Menu>
    <Menu className="ml-[5px] h-[20px] w-[35px] justify-between pr-[3px] pl-[3px]">
      <Icon n="sphere" />
      <UpDown />
    </Menu>
    <div className="ml-[5px]">
      <Cells>
        <div className={`flex w-[34px] items-center justify-between pr-[3px] pl-[3px] ${DARK}`}>
          <Icon n="pivot" />
          <UpDown />
        </div>
        <Cell n="centers" />
      </Cells>
    </div>
    <div className="ml-[5px]">
      <Cells>
        <Cell n="axes" bg={DARK} />
        <Cell n="arrow" bg={BLUE} w="w-[20px]" />
        <Cell n="arc" bg={DARK} w="w-[20px]" />
        <Cell n="scaleman" bg={DARK} w="w-[20px]" />
        <div className={`flex w-[71px] items-center justify-between pr-[3px] pl-[7px] text-white ${DARK}`}>
          <span className="pt-px">Global</span>
          <UpDown />
        </div>
      </Cells>
    </div>
    <div className="ml-[5px] flex gap-[5px]">
      <Layers dot />
      <Layers />
    </div>
    <div className="ml-[5px] flex gap-[5px]">
      <Cells>
        <Cell n="lockcam" w="w-[18px]" />
      </Cells>
      <Cells>
        <Cell n="prop" w="w-[18px]" />
      </Cells>
      <Cells>
        <Cell n="magnet" w="w-[19px]" />
        <div className={`flex w-[35px] items-center justify-between pr-[3px] pl-[3px] ${DARK}`}>
          <Icon n="increment" />
          <UpDown />
        </div>
        <Cell n="snapgrid" w="w-[19px]" />
      </Cells>
      <Cells>
        <Cell n="camplus" />
        <Cell n="clapper" />
      </Cells>
    </div>
  </div>
);

/* ---------- timeline ---------- */

const fx = (f: number) => 280.3 + 4.832 * f;
const TENS = Array.from({ length: 34 }, (_, i) => -50 + i * 10);

const Timeline = () => (
  <div className="flex h-[91px] shrink-0 flex-col bg-[#727272]">
    <svg width="1649" height="46" viewBox="0 0 1649 46" className="shrink-0 bg-[#727272]" shapeRendering="crispEdges">
      <path d="M0 0H281V46H0ZM1488 0H1649V46H1488Z" fill="#434343" />
      <path d={TENS.map((f) => `M${Math.floor(fx(f)) + 0.5} 0V46`).join("")} stroke="#000" strokeOpacity=".28" />
      <path d={[-60, ...TENS].map((f) => `M${Math.floor(fx(f + 5)) + 0.5} 0V46`).join("")} stroke="#000" strokeOpacity=".11" />
      <path d="M280.500 0V46" stroke="#1c1c1c" />
      <rect x="284" width="3" height="46" fill="#5fc038" />
    </svg>
    <div className="relative mx-[4px] mt-px h-[14px] w-[1640px] shrink-0 rounded-[7px] border border-[#3c3c3c] bg-linear-to-b from-[#969696] to-[#7c7c7c]">
      <div className="absolute top-[1px] left-[1px] size-[9px] rounded-full bg-[#5a5a5a]" />
      <div className="absolute top-0 right-0 h-[12px] w-[9px] rounded-r-full border border-[#4a4a4a] bg-[#686868]" />
      {TENS.map((f) => (
        <span
          key={f}
          className="absolute top-0 w-[40px] text-center text-[11px] leading-[13px] tracking-normal text-black"
          style={{ left: 291 - 14 - 20 + 4.802 * f - (f < 0 ? 4 : 0) }}
        >
          {f <= 280 ? f : ""}
        </span>
      ))}
    </div>
    <div className="mt-[3px] flex h-[27px] shrink-0 items-center border-t border-[#8a8a8a] bg-[#696969] pb-px pl-[9px] [&>span]:pt-px">
      <EditorBtn n="clock" />
      <span className="ml-[12px] w-[45px]">View</span>
      <span className="w-[55px]">Marker</span>
      <span className="w-[52px]">Frame</span>
      <span className="w-[58px]">Playback</span>
      <Cells>
        <Cell n="clockrange" />
        <Cell n="lock" />
      </Cells>
      <div className={`ml-[5px] flex h-[20px] w-[227px] divide-x divide-[#2c2c2c] overflow-hidden rounded-[10px] border border-[#343434] ${EMB}`}>
        <NumRow l="Start:" v="1" />
        <NumRow l="End:" v="250" />
      </div>
      <Num className="ml-[7px] h-[20px] w-[89px]" l="" v="1" />
      <div className="ml-[16px]">
        <Cells>
          <Cell n="first" />
          <Cell n="prev" w="w-[20px]" />
          <Cell n="back" w="w-[20px]" />
          <Cell n="back" flip w="w-[20px]" />
          <Cell n="prev" flip w="w-[20px]" />
          <Cell n="first" flip />
        </Cells>
      </div>
      <Menu className="ml-[5px] h-[20px] w-[115px] justify-between pr-[3px] pl-[7px]">
        <span>No Sync</span>
        <UpDown />
      </Menu>
      <div className="ml-[15px]">
        <Cells>
          <Cell n="record" w="w-[18px]" />
        </Cells>
      </div>
      <div className="ml-[6px]">
        <Cells>
          <div className="flex w-[129px] items-center bg-linear-to-b from-[#999] to-[#b0b0b0] pl-[3px]">
            <Icon n="keyset" />
          </div>
          <Cell n="key" w="w-[20px]" />
          <Cell n="keydel" w="w-[20px]" />
        </Cells>
      </div>
    </div>
  </div>
);

/* ---------- outliner ---------- */

const Expand = ({ minus = false }: { minus?: boolean }) => (
  <svg width="10" height="10" viewBox="0 0 10 10" className="shrink-0">
    <circle cx="5" cy="5" r="4" fill="#ddd" stroke="#111" />
    <path d={minus ? "M2.500 5H7.500" : "M2.500 5H7.500M5 2.500V7.500"} stroke="#111" strokeWidth="1.200" />
  </svg>
);

const Pipe = () => <span className="mx-[9px] h-[12px] w-[1.500px] bg-[#4b4b4b]" />;

const Toggles = () => (
  <div className="ml-auto flex w-[59px] items-center overflow-hidden">
    <Icon n="eye" className="ml-[2px]" />
    <Icon n="cursor" className="ml-[4px]" />
    <Icon n="camera" className="ml-[3px]" />
  </div>
);

const Outliner = () => (
  <div className="relative flex h-[165px] shrink-0 flex-col overflow-hidden bg-[#757575]">
    <div className="flex h-[27px] shrink-0 items-center border-t border-b border-t-[#858585] border-b-[#5a5a5a] bg-[#727272] pl-[9px]">
      <EditorBtn n="outliner" />
      <span className="ml-[12px] w-[45px] shrink-0 pt-px">View</span>
      <span className="w-[47px] shrink-0 pt-px">Search</span>
      <Menu className="h-[20px] w-[130px] shrink-0 pl-[7px]">
        <span>All Scenes</span>
      </Menu>
    </div>
    <div className="relative flex h-[119px] shrink-0 flex-col [&>*]:shrink-0">
      <div className="flex h-[20px] w-[192px] items-center bg-[#7d8388] pl-[4px]">
        <Expand minus />
        <span className="h-px w-[8px] bg-[#444]" />
        <span className="flex size-[18px] items-center justify-center rounded-full bg-[#a8abae]">
          <Icon n="scene" />
        </span>
        <span className="ml-[1px] pt-[2px]">Scene</span>
      </div>
      <div className="flex h-[20px] items-center pl-[28px]">
        <Expand />
        <Icon n="layersimg" className="ml-[3px]" />
        <span className="ml-[4px] pt-[2px]">RenderLayers</span>
        <Pipe />
        <span className="flex size-[18px] items-center justify-center rounded-full bg-[#a2a2a2]">
          <Icon n="layersimg" />
        </span>
      </div>
      <div className="flex h-[20px] items-center bg-[#6f6f6f] pl-[41px]">
        <span className="flex size-[18px] items-center justify-center rounded-full bg-[#a3a3b8]">
          <Icon n="world" />
        </span>
        <span className="ml-[2px] pt-[2px]">World</span>
      </div>
      <div className="flex h-[20px] items-center pl-[23px]">
        <Expand />
        <span className="h-px w-[8px] bg-[#444]" />
        <span className="flex size-[18px] items-center justify-center rounded-full bg-[#b98a52]">
          <Icon n="fontobj" />
        </span>
        <span className="ml-[2px] pt-[2px] text-white">Text</span>
        <Pipe />
        <Icon n="curvedata" className="ml-[2px]" />
        <Toggles />
      </div>
      <div className="flex h-[20px] items-center bg-[#6f6f6f] pl-[23px]">
        <Expand />
        <span className="h-px w-[7px] bg-[#444]" />
        <Icon n="mesh" className="ml-[2px]" />
        <span className="ml-[3px] pt-[2px] tracking-[-0.2px]">fr07-101.024</span>
        <Pipe />
        <Icon n="meshdata" className="ml-px" />
        <Toggles />
      </div>
      <div className="absolute top-0 left-[192px] flex h-full w-[41px] justify-between">
        <i className="w-px bg-[#5b5b5b]" />
        <i className="w-px bg-[#5b5b5b]" />
        <i className="w-px bg-[#5b5b5b]" />
      </div>
      <div className="absolute top-[19px] left-[27px] h-[52px] w-px bg-[#444]" />
    </div>
    <div className="mx-[4px] mt-[2px] h-[13px] w-[243px] shrink-0 rounded-[7px] border border-[#484848] bg-[#535353]">
      <div className="-m-px h-[13px] w-[203px] rounded-[7px] border border-[#3c3c3c] bg-linear-to-b from-[#959595] to-[#7c7c7c]" />
    </div>
    <Corner className="top-0 right-0" />
    <Corner className="bottom-0 left-0 rotate-180" />
  </div>
);

/* ---------- properties ---------- */

const PTABS = ["camera", "layersimg", "scene", "world", "cube", "link", "wrench", "wave", "material", "texture"];

const P = ({ children }: Kids) => <div className="flex flex-col px-[3px] [&>*]:shrink-0">{children}</div>;

const PropRow = ({ l, icon, drop, className }: { l: string; icon: string; drop?: boolean; className: string }) => (
  <div className={`flex items-center pl-[7px] ${className}`}>
    <span className="w-[76px] pt-px">{l}</span>
    <Field className="h-[20px] w-[153px]" icon={icon} drop={drop} />
  </div>
);

const Properties = () => (
  <div className="relative flex flex-1 flex-col overflow-hidden bg-[#727272]">
    <div className="flex h-[26px] shrink-0 items-center border-t border-[#858585] bg-[#6a6a6a] pb-px pl-[9px]">
      <EditorBtn n="props" />
      <div className="ml-[7px] flex h-[20px] shrink-0 divide-x divide-[#222] overflow-hidden rounded-l-[5px] border border-[#222]">
        {PTABS.map((n) => (
          <div key={n} className={`flex w-[20px] items-center justify-center first:w-[19px] ${n === "scene" ? BLUE : DARK}`}>
            <Icon n={n} className={n === "scene" ? "" : "opacity-75"} />
          </div>
        ))}
        <div className={`w-[20px] ${DARK}`} />
      </div>
    </div>
    <div className="flex w-[247px] flex-col pl-[5px] [&>*]:shrink-0">
      <div className="flex h-[35px] items-center pt-px pl-[5px]">
        <Icon n="pin" />
        <Icon n="scene" className="ml-[6px]" />
        <span className="ml-[4px] pt-px">Scene</span>
      </div>
      <Sep />
      <Title>Scene</Title>
      <P>
        <PropRow className="mt-[7px]" l="Camera:" icon="cube" drop />
        <PropRow className="mt-[5px]" l="Background:" icon="scene" />
        <PropRow className="mt-[5px]" l="Active Clip:" icon="clip" />
      </P>
      <Sep className="mt-[7px]" />
      <Title>Units</Title>
      <P>
        <Seg className="mt-[7px] h-[20px]" cols="grid-cols-[77px_77px_1fr]" items={["None", "Metric", "Imperial"]} on={1} />
        <Seg className="mt-[2px] h-[20px]" cols="grid-cols-[117px_1fr]" items={["Degrees", "Radians"]} on={0} />
        <div className="mt-[5px] flex h-[20px] items-center">
          <Num className="h-[20px] w-[114px]" l="Scale:" v="0.100" />
          <span className="mr-[8px] ml-[11px]">
            <Check />
          </span>
          <span className="pt-px">Separate Units</span>
        </div>
      </P>
      <Sep className="mt-[7px]" />
      <Title>Keying Sets</Title>
      <P>
        <div className="mt-[7px] flex h-[43px] justify-between">
          <div className="relative w-[208px] rounded-[4px] border border-[#444] bg-[#7e7e7e]">
            <svg width="206" height="41" viewBox="0 0 206 41">
              <circle cx="14" cy="32" r="3.800" fill="#aaa" stroke="#444" />
              <path d="M11.500 32H16.500M14 29.500V34.500" stroke="#333" />
              <path d="M105 30.500H119M105 33.500H119" stroke="#222" />
              <path d="M105 31.500H119M105 34.500H119" stroke="#aaa" strokeWidth=".6" />
            </svg>
          </div>
          <div className="flex h-[40px] w-[20px] flex-col divide-y divide-[#333] overflow-hidden rounded-[5px] border border-[#444]">
            <div className="flex flex-1 items-center justify-center bg-[#999]">
              <Icon n="plus" />
            </div>
            <div className="flex flex-1 items-center justify-center bg-[#858585]">
              <Icon n="minus" />
            </div>
          </div>
        </div>
      </P>
      <Sep className="mt-[7px]" />
      <Title open={false} h="h-[22px]">
        Color Management
      </Title>
      <Sep />
      <Title open={false} h="h-[22px]">
        Audio
      </Title>
      <Sep />
      <Title check>Gravity</Title>
      <P>
        <div className={`mt-[7px] grid h-[20px] grid-cols-[77px_78px_1fr] divide-x divide-[#2c2c2c] overflow-hidden rounded-[10px] border border-[#343434] ${EMB}`}>
          <NumRow l="X:" v="0m/s²" className="[&>span]:ml-[4px] [&>span]:pr-[3px]" />
          <NumRow l="Y:" v="0m/s²" className="[&>span]:ml-[4px] [&>span]:pr-[3px]" />
          <NumRow l="" v="-9.81m/s²" className="[&>span]:ml-[2px] [&>span]:pr-[3px] [&>span]:tracking-[-0.500px]" />
        </div>
      </P>
      <Sep className="mt-[7px]" />
      <Title>Rigid Body World</Title>
      <P>
        <Btn className="mt-[7px] h-[20px] justify-center pr-px">Add Rigid Body World</Btn>
      </P>
      <Sep className="mt-[7px]" />
      <Title check={false}>Simplify</Title>
      <P>
        <div className="mt-[8px] grid h-[128px] grid-cols-2 gap-x-[8px] opacity-50">
          <div>
            <Label className="mb-px pl-[7px]">Viewport:</Label>
            <Num className="mb-[2px] h-[20px]" l="Subdivision:" v="6" />
            <Slider className="h-[20px]" l="Child Part:" v="1.000" />
          </div>
          <div>
            <Label className="mb-px pl-[8px]">Render:</Label>
            <Num className="mb-[2px] h-[20px]" l="Subdivision:" v="6" />
            <Slider className="mb-[2px] h-[20px]" l="Child Part:" v="1.000" />
            <Num className="mb-[2px] h-[20px]" l="Shadow Sam:" v="16" />
            <Slider className="h-[20px]" l="AO and S:" v="1.000" />
            <div className="mt-[5px] flex h-[14px] items-center gap-[8px] pl-[3px] whitespace-nowrap">
              <Check />
              <span className="pt-px">Skip Quad to Tr…</span>
            </div>
          </div>
        </div>
      </P>
      <Sep className="mt-[8px]" />
      <Title open={false}>Custom Properties</Title>
    </div>
    <Corner className="top-0 right-0" />
    <Corner className="bottom-0 left-0 rotate-180" />
  </div>
);

/* ---------- taskbar ---------- */

const Slot = ({ children, line = false, w = "w-[51px]", active = false }: Kids & { line?: boolean; w?: string; active?: boolean }) => (
  <div className={`flex h-[50px] shrink-0 flex-col items-center ${w} ${active ? "bg-[#34393d]" : ""}`}>
    <div className="flex flex-1 items-center pt-[3px]">{children}</div>
    <div className={`h-[3px] w-full ${line ? "bg-[#76b9ed]" : ""}`} />
  </div>
);

const Taskbar = () => (
  <div className="relative flex h-[50px] shrink-0 overflow-hidden bg-linear-to-r from-[#05070a] via-[#03070c] to-[#14171a] text-white">
    <svg width="1920" height="50" viewBox="0 0 1920 50" className="absolute inset-0" fill="none">
      <path d="M600 8 820 46M640 2 900 30M660 18 800 34M820 0 880 50M960 0 900 50M940 0 1120 40M1000 0 1200 48M1060 0 1190 28M1180 0 1240 50" stroke="#0a131b" strokeWidth="4" />
      <path d="M1280 6 1320 16 1300 30 1370 14 1400 30 1340 50H1280ZM1430 14 1480 4 1530 50H1440Z" fill="#091320" />
      <path d="M1520 0H1620L1560 40ZM1300 20 1380 30 1330 40Z" fill="#191d20" />
      <path d="M1290 10 1380 26M1350 40 1420 20M1400 34 1480 48M1640 6 1560 50M1660 10 1600 50M1700 0 1780 50M1730 0 1850 50M1760 0 1900 46M1800 0 1920 34" stroke="#1d2429" strokeWidth="3" />
    </svg>
    <div className="relative flex w-full">
      <Slot w="w-[60px]">
        <svg width="20" height="20" viewBox="0 0 20 20">
          <path d="M0 3 8 1.800V9.500H0ZM9 1.600 20 0V9.500H9ZM0 10.500H8V18.200L0 17ZM9 10.500H20V20L9 18.400Z" fill="#fff" />
        </svg>
      </Slot>
      <Slot w="w-[60px]">
        <svg width="22" height="22" viewBox="0 0 22 22" fill="none" stroke="#fff" strokeWidth="1.400">
          <circle cx="14" cy="7.500" r="6.500" />
          <path d="M9.500 12.500 1 21" />
        </svg>
      </Slot>
      <Slot w="w-[60px]">
        <svg width="24" height="20" viewBox="0 0 24 20" fill="none" stroke="#fff" strokeWidth="1.200">
          <path d="M4.500 1H19.500V19H4.500ZM3 4H.7V16H3M21 4H23.300V16H21" />
        </svg>
      </Slot>
      <div className="w-[7px]" />
      <Slot line>
        <svg width="28" height="28" viewBox="0 0 28 28">
          <path d="M1 1H11L13 3.500H27V24H1Z" fill="#f6d36b" />
          <path d="M1 6H27V24H1Z" fill="#fde79c" />
          <path d="M3 2.500H9" stroke="#fff" strokeWidth="1.500" />
          <path d="M6 27V17Q6 15 8 15H20Q22 15 22 17V27H18V21H10V27Z" fill="#27b4ee" />
        </svg>
      </Slot>
      <div className="w-[11px]" />
      <Slot line>
        <svg width="28" height="28" viewBox="0 0 28 28">
          <circle cx="14" cy="14" r="13.500" fill="#e8671b" />
          <path d="M8 2Q19-2 25 8 28 20 19 25 26 16 20 9Z" fill="#fbb829" />
          <path d="M9 2Q18-1 22 6 24 13 18 17 12 20 9 15L14 11 9 9Z" fill="#2267a8" />
          <path d="M12 3Q18 2 20 7L15 9Z" fill="#69b5e4" />
          <path d="M1 9 4 5 10 8 12 11 8 13Q10 20 18 18 12 26 4 20Z" fill="#d9501a" />
        </svg>
      </Slot>
      <div className="w-[11px]" />
      <Slot>
        <svg width="28" height="28" viewBox="0 0 28 28">
          <rect width="28" height="28" rx="4" fill="#3f9232" />
          <path d="M9 5 19 4V20L9 22ZM6 8V25L16 24M22 6V20" fill="none" stroke="#fff" strokeWidth="2" />
          <path d="M11.500 8.500 16.500 8 11.500 12 16.500 11.500 11.500 16 16.500 15.500 11.500 19" fill="none" stroke="#fff" strokeWidth="1.500" />
        </svg>
      </Slot>
      <div className="w-[11px]" />
      <Slot>
        <svg width="30" height="30" viewBox="0 0 30 30">
          <circle cx="15" cy="15" r="14" fill="#141a25" stroke="#7a828a" strokeWidth="1.200" />
          <path d="M15 6Q20 9.500 18 14.500L16 17.500V24H14V17.500L12 14.500Q10 9.500 15 6Z" fill="#179287" />
          <path d="M8.500 10Q4.500 17 11 23.500M21.500 10Q25.500 17 19 23.500" fill="none" stroke="#157a74" strokeWidth="1.600" />
        </svg>
      </Slot>
      <div className="w-[12px]" />
      <Slot line>
        <svg width="28" height="34" viewBox="0 0 28 34">
          <path d="M0 5 17 0 28 6V34H0Z" fill="#68217a" />
          <path d="M3 11V22L6 23.500 12 18.500 20 26 25 24V8L20 6 12 14 6 9.500ZM6 14 9 16.500 6 19ZM20 12V20.500L15.500 16.500Z" fill="#fff" fillRule="evenodd" />
        </svg>
      </Slot>
      <div className="w-[6px]" />
      <Slot line active w="w-[57px]">
        <Icon n="blender" s={30} />
      </Slot>
      <div className="flex h-[50px] w-[5px] flex-col justify-end border-l border-[#111] bg-[#262c30]">
        <div className="h-[3px] bg-[#76b9ed]" />
      </div>
      <div className="w-[5px]" />
      <Slot line>
        <svg width="30" height="34" viewBox="0 0 30 34" className="-mb-px">
          <rect x="1" y="1" width="28" height="32" fill="#b50d0d" stroke="#5c0505" strokeWidth="1.500" strokeDasharray="2 1.500" />
          <path d="M8 24 10.500 7.500H19M9.500 15H15M15.500 15.500H23.500L16 26H23" fill="none" stroke="#fff" strokeWidth="3.200" />
        </svg>
      </Slot>
      <div className="ml-auto flex items-center font-['Open_Sans',sans-serif] text-[15px] leading-none">
        <svg width="110" height="30" viewBox="0 0 110 30" fill="none" stroke="#fff" strokeWidth="1.500">
          <path d="M2 20 9.500 12 17 20" />
          <path d="M33 23Q33 8 48 8M37 23Q37 12.500 48 12.500M41 23Q41 17 48 17" strokeWidth="1.300" />
          <rect x="45" y="20.500" width="3" height="3" fill="#fff" stroke="none" />
          <path d="M61 12.500H64L68 8.500V23.500L64 19.500H61Z" strokeWidth="1.200" />
          <path d="M71 13Q73 16 71 19" />
          <path d="M74 10.500Q78 16 74 21.500M77 8Q82.500 16 77 24" stroke="#777" />
          <path d="M91 7H109V23H104L102 26 100 23H91Z" />
          <path d="M94.500 11.500H105.500M94.500 15H105.500M94.500 18.500H102" strokeWidth="1.200" />
        </svg>
        <div className="ml-[13px] flex w-[28px] flex-col items-center gap-[9px] pt-px tracking-[-0.4px]">
          <span>FRA</span>
          <span>FR</span>
        </div>
        <div className="mr-[14px] ml-[19px] flex w-[63px] flex-col items-center gap-[8px] text-[15.5px] tracking-[-0.5px]">
          <span>14:58</span>
          <span className="whitespace-nowrap">26-04-16</span>
        </div>
        <div className="h-[50px] w-[5px] border-l border-[#666]" />
      </div>
    </div>
  </div>
);

/* ---------- page ---------- */

export default function App() {
  return (
    <div className="flex h-[1080px] w-[1920px] flex-col overflow-hidden bg-[#5f5f5f] font-['DejaVu_Sans',sans-serif] text-[11px] leading-none tracking-[-0.6px] text-black">
      <div className="flex h-[1030px] shrink-0">
        <div className="relative flex w-[9px] shrink-0 flex-col overflow-hidden border-r border-[#1a1a1a] bg-[#5a5a5a]">
          <div className="h-[35px] bg-[#f2f2f2] pt-[8px] pl-[2px]">
            <Icon n="blender" s={18} />
          </div>
          <div className="h-[30px] border-b border-black bg-[#686868]" />
          <div className="h-[512px] bg-[#434343]" />
          <div className="h-[240px] bg-[#6c6c6c]" />
          <div className="h-px bg-black" />
          <Corner className="top-[52px] left-0" />
          <Corner className="top-[807px] -left-[3px]" />
        </div>
        <div className="flex w-[1902px] shrink-0 flex-col">
          <div className="relative flex h-[1022px] shrink-0 flex-col border-t border-b border-t-[#1a1a1a] border-b-[#1a1a1a] bg-[#727272]">
            <TitleBar />
            <InfoBar />
            <div className="flex min-h-0 flex-1 border-t border-black">
              <div className="relative flex w-[1649px] shrink-0 flex-col">
                <div className="flex h-[839px] shrink-0">
                  <ToolShelf />
                  <Viewport />
                  <NPanel />
                </div>
                <ViewHeader />
                <div className="h-px shrink-0 bg-black" />
                <Timeline />
                <Corner className="top-0 right-0" />
                <Corner className="top-[853px] left-0 rotate-180" />
                <Corner className="top-[866px] right-0" />
                <Corner className="bottom-0 left-0 rotate-180" />
              </div>
              <div className="w-px shrink-0 bg-black" />
              <div className="flex min-w-0 flex-1 flex-col">
                <Outliner />
                <div className="h-px shrink-0 bg-black" />
                <Properties />
              </div>
            </div>
            <Corner className="top-[52px] left-0 rotate-180" />
          </div>
          <div className="flex h-[8px] overflow-hidden bg-[#5a5a5a] pl-[1544px]">
            <div className="relative w-full border-l border-black">
              <Corner className="top-0 left-0" />
              <div className="mt-[3px] mr-[16px] ml-[12px] h-px bg-[#333]" />
            </div>
          </div>
        </div>
        <div className="flex w-[9px] shrink-0 flex-col border-l border-[#1a1a1a] bg-[#636363]">
          <div className="h-[38px] bg-[#f2f2f2]" />
          <div className="h-[17px] border-b border-black bg-[#686868]" />
          <div className="h-[22px] border-b border-[#333] bg-[#8a8a8a]" />
          <div className="h-[10px]" />
          <div className="h-[304px] w-[4px] rounded-r-[4px] border-r border-[#3c3c3c] bg-[#535353]" />
          <div className="h-[200px] w-[4px] rounded-r-[4px] border-r border-[#3c3c3c] bg-[#7c7c7c]" />
          <div className="h-[6px] border-b border-black" />
          <div className="mt-[30px] h-[190px] w-[4px] rounded-r-[4px] border-r border-[#3c3c3c] bg-[#858585]" />
          <div className="h-[198px] w-[4px] rounded-br-[4px] bg-[#4d4d4d]" />
        </div>
      </div>
      <Taskbar />
    </div>
  );
}
